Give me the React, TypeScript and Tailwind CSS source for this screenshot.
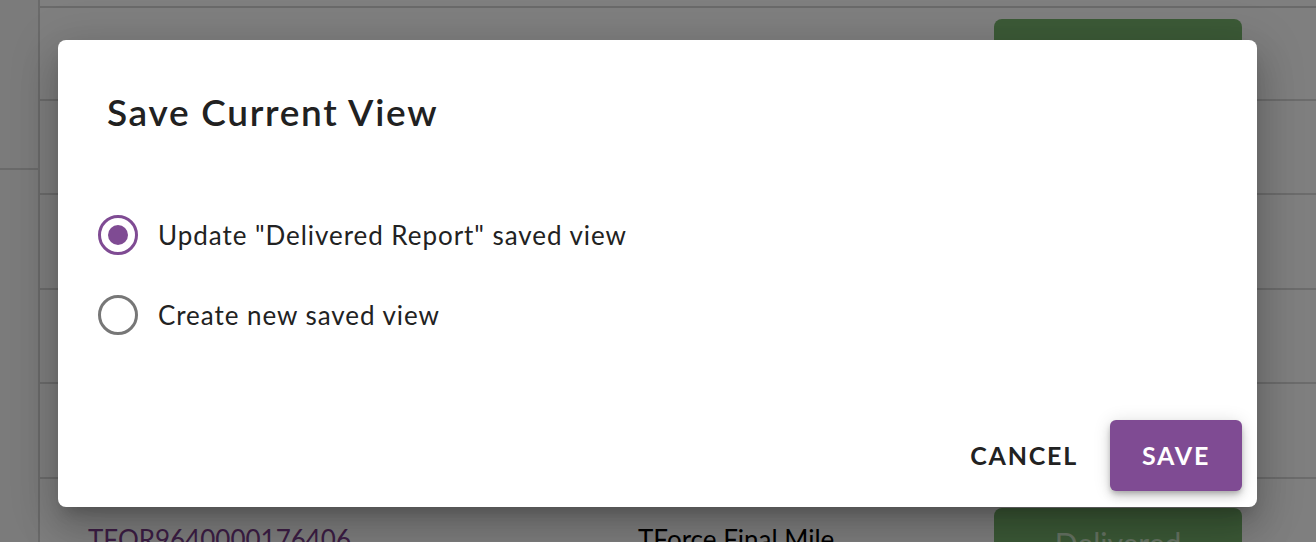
import { useState } from 'react';

type Row = { id: string; carrier: string; height: string; badge?: string };

const rows: Row[] = [
  { id: '', carrier: '', height: 'h-[93px]', badge: 'center' },
  { id: '', carrier: '', height: 'h-[94px]' },
  { id: '', carrier: '', height: 'h-[95px]' },
  { id: '', carrier: '', height: 'h-[94px]' },
  { id: '', carrier: '', height: 'h-[95px]' },
  { id: 'TFOR9640000176406', carrier: 'TForce Final Mile', height: 'h-[120px]', badge: 'top' },
];

function Radio({ checked }: { checked: boolean }) {
  return (
    <span
      className={`flex h-[40px] w-[40px] shrink-0 items-center justify-center rounded-full border-[3px] ${
        checked ? 'border-[#7f4b93]' : 'border-[#777777]'
      }`}
    >
      {checked && <span className="h-[20px] w-[20px] rounded-full bg-[#7f4b93]" />}
    </span>
  );
}

export default function App() {
  const [choice, setChoice] = useState<'update' | 'create'>('update');

  return (
    <div className="relative h-[542px] w-[1316px] overflow-hidden bg-white font-['Lato',sans-serif] text-[#222]">
      {/* Page behind the dialog */}
      <div className="flex h-full">
        <div className="flex w-[40px] shrink-0 flex-col border-r-2 border-[#d4d4d4] bg-[#f6f6f6]">
          <div className="h-[170px] border-b-2 border-[#d4d4d4]" />
        </div>
        <div className="flex-1 pt-[6px]">
          <div className="border-t-2 border-[#d4d4d4]">
            {rows.map((row, i) => (
              <div key={i} className={`flex border-b-2 border-[#d8d8d8] ${row.height} ${row.badge === 'center' ? 'items-center' : 'items-start pt-[29px]'}`}>
                <div className={`w-[598px] pl-[48px] text-[26px] leading-[30px] text-[#7b3d8c] ${row.badge === 'top' ? 'pt-[16px]' : ''}`}>{row.id}</div>
                <div className={`w-[356px] text-[26px] leading-[30px] text-black ${row.badge === 'top' ? 'pt-[16px]' : ''}`}>{row.carrier}</div>
                {row.badge && (
                  <div className="flex h-[70px] w-[248px] items-center justify-center rounded-[8px] bg-[#78b46e] text-[30px] text-[#cfe8c8]">
                    Delivered
                  </div>
                )}
              </div>
            ))}
          </div>
        </div>
      </div>

      {/* Overlay + dialog */}
      <div className="absolute inset-0 bg-black/50">
        <div className="ml-[58px] mt-[40px] flex h-[467px] w-[1199px] flex-col rounded-[8px] bg-white shadow-[0_11px_15px_-7px_rgba(0,0,0,0.2),0_24px_38px_3px_rgba(0,0,0,0.14),0_9px_46px_8px_rgba(0,0,0,0.12)]">
          <h2 className="pl-[49px] pt-[49px] text-[37px] font-semibold leading-[46px] tracking-[1.7px] text-[#212121]">
            Save Current View
          </h2>

          <div className="mt-[80px] flex flex-col gap-[40px] pl-[40px]">
            <label className="flex cursor-pointer items-center gap-[20px]" onClick={() => setChoice('update')}>
              <Radio checked={choice === 'update'} />
              <span className="text-[26px] leading-[40px] tracking-[0.95px] text-[#222]">Update "Delivered Report" saved view</span>
            </label>
            <label className="flex cursor-pointer items-center gap-[20px]" onClick={() => setChoice('create')}>
              <Radio checked={choice === 'create'} />
              <span className="text-[26px] leading-[40px] tracking-[0.95px] text-[#222]">Create new saved view</span>
            </label>
          </div>

          <div className="mt-auto flex items-center justify-end gap-[32px] pb-[16px] pr-[15px]">
            <button className="text-[25px] font-bold tracking-[1.8px] text-[#222]">CANCEL</button>
            <button className="flex h-[71px] w-[132px] items-center justify-center rounded-[6px] bg-[#7f4b93] text-[25px] font-bold tracking-[1.8px] text-white shadow-[0_3px_5px_-1px_rgba(0,0,0,0.2),0_6px_10px_0_rgba(0,0,0,0.14),0_1px_18px_0_rgba(0,0,0,0.12)]">
              SAVE
            </button>
          </div>
        </div>
      </div>
    </div>
  );
}
